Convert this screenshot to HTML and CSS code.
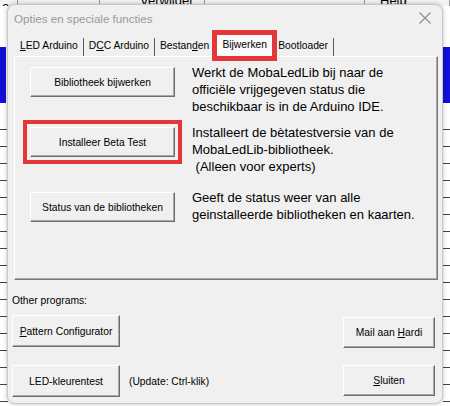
FILE: index.html
```html
<!DOCTYPE html>
<html>
<head>
<meta charset="utf-8">
<link rel="stylesheet" href="styles.css">
</head>
<body>
<div class="desk">
  <div class="sheet-top">
    <span class="cell c1">e</span>
    <span class="cell c2"></span>
    <span class="cell c3">Verwijder</span>
    <span class="cell c4"></span>
    <span class="cell c5">Help</span>
    <span class="cell c6"></span>
  </div>

  <div class="dialog">
    <div class="titlebar">
      <span class="title">Opties en speciale functies</span>
      <svg class="close" width="12" height="12" viewBox="0 0 12 12"><path d="M0.5 0.5 L11.5 11.5 M11.5 0.5 L0.5 11.5" stroke="#8a8a8a" stroke-width="1.1" fill="none"/></svg>
    </div>

    <div class="tabs">
      <span class="tab"><span><u>L</u>ED Arduino</span></span>
      <span class="tab"><span>D<u>C</u>C Arduino</span></span>
      <span class="tab"><span>Bestan<u>d</u>en</span></span>
      <span class="tab active"><span>Bijwerken</span></span>
      <span class="tab"><span>Bootloader</span></span>
    </div>

    <div class="panel">
      <div class="row r1">
        <div class="btn wide"><span>Bibliotheek bijwerken</span></div>
        <div class="desc">Werkt de MobaLedLib bij naar de<br>officiële vrijgegeven status die<br>beschikbaar is in de Arduino IDE.</div>
      </div>
      <div class="row r2">
        <div class="btn wide marked"><span>Installeer Beta Test</span></div>
        <div class="desc">Installeert de bètatestversie van de<br>MobaLedLib-bibliotheek.<br>&nbsp;(Alleen voor experts)</div>
      </div>
      <div class="row r3">
        <div class="btn wide"><span>Status van de bibliotheken</span></div>
        <div class="desc">Geeft de status weer van alle<br>geinstalleerde bibliotheken en kaarten.</div>
      </div>
    </div>

    <div class="bottom">
      <div class="left-col">
        <div class="label">Other programs:</div>
        <div class="btn small b-pattern"><span><u>P</u>attern Configurator</span></div>
        <div class="led-row">
          <div class="btn small"><span>LED-kleurentest</span></div>
          <span class="hint">(Update: Ctrl-klik)</span>
        </div>
      </div>
      <div class="right-col">
        <div class="btn side b-mail"><span>Mail aan <u>H</u>ardi</span></div>
        <div class="btn side b-close"><span><u>S</u>luiten</span></div>
      </div>
    </div>
  </div>
</div>
</body>
</html>
```

FILE: styles.css
```css
* { box-sizing: border-box; }

html, body {
  margin: 0;
  padding: 0;
}

body {
  width: 450px;
  height: 406px;
  overflow: hidden;
  font-family: "Liberation Sans", Arial, sans-serif;
}

.desk {
  position: relative;
  width: 450px;
  height: 406px;
  background-color: #ffffff;
  background-image:
    linear-gradient(#1010d8, #1010d8),
    linear-gradient(#1010d8, #1010d8),
    repeating-linear-gradient(to bottom, transparent 0, transparent 16px, #444 16px, #444 17px),
    repeating-linear-gradient(to bottom, transparent 0, transparent 16px, #444 16px, #444 17px);
  background-size: 6px 56px, 8px 56px, 8px 290px, 8px 290px;
  background-position: 0 47px, 443px 47px, 0 113px, 443px 113px;
  background-repeat: no-repeat;
}

.sheet-top {
  display: flex;
  height: 6px;
  overflow: hidden;
  background: #f2f2f2;
}

.cell {
  display: block;
  height: 6px;
  border-right: 1px solid #9a9a9a;
  font-size: 13px;
  line-height: 13px;
  text-indent: 2px;
  color: #000;
}
.cell.c1 { width: 18px; }
.cell.c2 { width: 82px; }
.cell.c3 { width: 105px; text-indent: 40px; line-height: 2px; }
.cell.c4 { width: 160px; }
.cell.c5 { width: 40px; text-indent: 15px; line-height: 2px; }
.cell.c6 { flex: 1; }

.dialog {
  position: absolute;
  left: 7px;
  top: 4px;
  width: 436px;
  height: 400px;
  background: #f0f0f0;
  border: 1px solid #c8c8c8;
  border-radius: 8px;
  box-shadow: 0 0 4px rgba(0, 0, 0, 0.25);
  display: flex;
  flex-direction: column;
  overflow: hidden;
}

.titlebar {
  height: 27px;
  flex: none;
  display: flex;
  align-items: center;
  justify-content: space-between;
  padding: 0 11px 0 6px;
}

.title {
  font-size: 11.6px;
  color: #9a9a9a;
  margin-top: -1px;
}

.close {
  display: block;
  margin-top: -1px;
}

.tabs {
  height: 24px;
  flex: none;
  display: flex;
  align-items: flex-end;
  padding-left: 8px;
  position: relative;
  z-index: 1;
}

.tab {
  height: 18px;
  line-height: 16px;
  font-size: 10.3px;
  color: #000;
  padding: 0 5px 0 4px;
  border-right: 1px solid #5a5a5a;
  margin-right: 1px;
  white-space: nowrap;
}

.tab u { text-decoration-thickness: 1px; text-underline-offset: 1px; }

.tab.active {
  width: 55px;
  height: 21px;
  line-height: 19px;
  padding: 0;
  text-align: center;
  margin: 0 2px 0 1px;
  background: #fafafa;
  border: none;
  outline: 5px solid #e3373a;
  outline-offset: 0;
}

.panel {
  flex: none;
  margin-left: 6px;
  width: 424px;
  height: 224px;
  border-top: 1px solid #ffffff;
  border-left: 1px solid #ffffff;
  border-right: 1px solid #7a7a7a;
  border-bottom: 1px solid #7a7a7a;
  box-shadow: inset -1px -1px 0 #a8a8a8;
  padding: 10px 0 0 15px;
  display: flex;
  flex-direction: column;
}

.row {
  display: flex;
  align-items: flex-start;
  gap: 17px;
  flex: none;
}
.row.r1 { height: 60px; }
.row.r2 { height: 65px; }

.btn {
  display: flex;
  align-items: center;
  justify-content: center;
  font-size: 10.3px;
  color: #000;
  background: #f0f0f0;
  border-top: 1px solid #ffffff;
  border-left: 1px solid #ffffff;
  border-right: 1px solid #6e6e6e;
  border-bottom: 1px solid #6e6e6e;
  box-shadow: inset -1px -1px 0 #a8a8a8;
  white-space: nowrap;
  flex: none;
}

.btn u { text-decoration-thickness: 1px; text-underline-offset: 1px; }

.btn.wide {
  width: 145px;
  height: 30px;
}

.btn.marked {
  outline: 4px solid #e3373a;
  outline-offset: 3px;
}

.desc {
  font-size: 13px;
  line-height: 17px;
  color: #000;
  margin-top: -3px;
  white-space: nowrap;
}

.bottom {
  flex: 1;
  display: flex;
  justify-content: space-between;
  padding: 0 7px 0 4px;
}

.left-col {
  display: flex;
  flex-direction: column;
}

.label {
  margin-top: 14px;
  font-size: 10.3px;
  line-height: 13px;
  color: #000;
}

.btn.small {
  width: 108px;
  height: 32px;
}

.b-pattern { margin-top: 8px; }

.led-row {
  display: flex;
  align-items: center;
  gap: 9px;
  margin-top: 18px;
}

.hint {
  font-size: 10.3px;
  color: #000;
}

.right-col {
  display: flex;
  flex-direction: column;
}

.btn.side {
  width: 92px;
  height: 31px;
}

.b-mail { margin-top: 37px; }
.b-close { margin-top: 17px; }
```
